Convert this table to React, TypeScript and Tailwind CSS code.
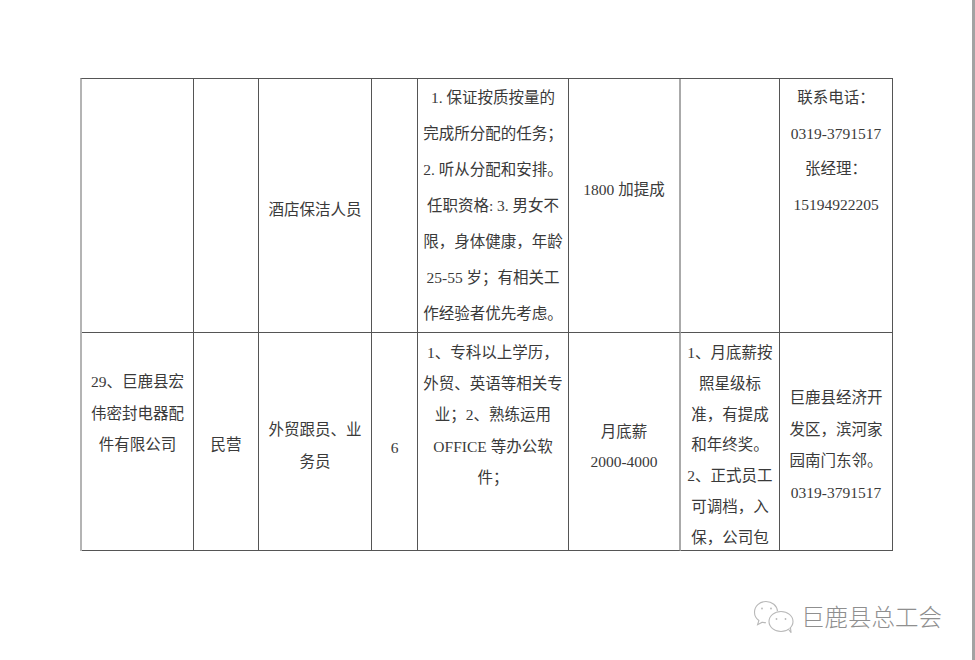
const Cell = ({ lines = [], className = "" }: { lines?: string[]; className?: string }) => (
    <div className={`border-r border-b border-[#555] overflow-hidden text-center ${className}`}>
        {lines.map((l, i) => (
            <div key={i} className="whitespace-nowrap">{l}</div>
        ))}
    </div>
);

const WeChatLogo = () => (
    <svg width="42" height="34" viewBox="0 0 42 34" fill="none" stroke="#b8b8b8" strokeWidth="1.1">
        <path d="M13 1.5C6.6 1.5 1.5 6.3 1.5 12.2c0 3.4 1.7 6.3 4.4 8.3l-1.3 4.2 4.7-2.5c1.2.3 2.4.5 3.7.5" />
        <path d="M13 1.5c6 0 11 4.2 11.5 9.6" />
        <circle cx="9" cy="8.5" r="0.9" fill="#b8b8b8" stroke="none" />
        <circle cx="18" cy="8.5" r="0.9" fill="#b8b8b8" stroke="none" />
        <ellipse cx="28" cy="21.5" rx="12" ry="10" fill="#fff" />
        <path d="M35.5 29.2l2.6 3.6-0.6-4.8" fill="#fff" />
        <circle cx="23.5" cy="19" r="0.9" fill="#b8b8b8" stroke="none" />
        <circle cx="32.5" cy="19" r="0.9" fill="#b8b8b8" stroke="none" />
    </svg>
);

const App = () => {
    return (
        <div className="w-[975px] h-[660px] bg-white flex overflow-hidden">
            <div className="flex-1 flex flex-col pt-[78px] pl-[80px]">
                <div className="grid grid-cols-[112px_65px_113px_46px_151px_112px_99px_113px] grid-rows-[254px_218px] w-max border-t border-t-[#555] border-l-2 border-l-[#b4b4b4] text-[15.5px] text-[#3a3a3a] font-['Liberation_Serif','Noto_Sans_CJK_SC',serif]">
                    {/* row 1 */}
                    <Cell />
                    <Cell />
                    <Cell className="pt-[113px] leading-[36px]" lines={["酒店保洁人员"]} />
                    <Cell />
                    <Cell
                        className="pt-[1px] leading-[36px]"
                        lines={[
                            "1. 保证按质按量的",
                            "完成所分配的任务；",
                            "2. 听从分配和安排。",
                            "任职资格: 3. 男女不",
                            "限，身体健康，年龄",
                            "25-55 岁；有相关工",
                            "作经验者优先考虑。",
                        ]}
                    />
                    <Cell className="pt-[93px] leading-[36px] border-r-2 border-r-[#aaa]" lines={["1800 加提成"]} />
                    <Cell />
                    <Cell
                        className="pt-[1px] leading-[35.7px]"
                        lines={["联系电话：", "0319-3791517", "张经理：", "15194922205"]}
                    />

                    {/* row 2 */}
                    <Cell
                        className="pt-[33px] leading-[31.5px]"
                        lines={["29、巨鹿县宏", "伟密封电器配", "件有限公司"]}
                    />
                    <Cell className="pt-[96px] leading-[31px]" lines={["民营"]} />
                    <Cell className="pt-[81px] leading-[32px]" lines={["外贸跟员、业", "务员"]} />
                    <Cell className="pt-[99px] leading-[31px]" lines={["6"]} />
                    <Cell
                        className="pt-[4px] leading-[31.2px]"
                        lines={[
                            "1、专科以上学历，",
                            "外贸、英语等相关专",
                            "业；2、熟练运用",
                            "OFFICE 等办公软",
                            "件；",
                        ]}
                    />
                    <Cell className="pt-[84px] leading-[30px] border-r-2 border-r-[#aaa]" lines={["月底薪", "2000-4000"]} />
                    <Cell
                        className="pt-[5px] leading-[30.8px]"
                        lines={[
                            "1、月底薪按",
                            "照星级标",
                            "准，有提成",
                            "和年终奖。",
                            "2、正式员工",
                            "可调档，入",
                            "保，公司包",
                        ]}
                    />
                    <Cell
                        className="pt-[49px] leading-[31.7px]"
                        lines={["巨鹿县经济开", "发区，滨河家", "园南门东邻。", "0319-3791517"]}
                    />
                </div>

                <div className="flex justify-end items-center gap-[6px] mt-[48px] pr-[30px]">
                    <WeChatLogo />
                    <span className="text-[23.5px] font-light text-[#8f8f8f] font-['Noto_Sans_CJK_SC',sans-serif]">
                        巨鹿县总工会
                    </span>
                </div>
            </div>
            <div className="w-[3px] bg-[#a3a3a3]" />
        </div>
    );
};

export default App;
